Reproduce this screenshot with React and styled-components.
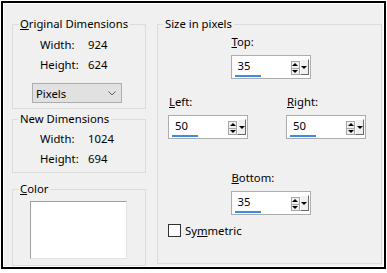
import React from "react";
import styled, { createGlobalStyle } from "styled-components";

const GlobalStyle = createGlobalStyle`
  html, body {
    margin: 0;
    padding: 0;
    background: #fff;
  }
  body {
    font-family: "Noto Sans", "Open Sans", sans-serif;
    font-size: 11.3px;
    color: #000;
  }
`;

const Frame = styled.div`
  box-sizing: border-box;
  margin: 1px 0 0 1px;
  width: 385px;
  height: 268px;
  border: 2px solid #000;
  background: #f0f0f0;
  box-shadow: inset 0 0 0 1px #fff;
  padding: 13px 0 0 9px;
  display: flex;
  gap: 11px;
`;

const LeftColumn = styled.div`
  width: 134px;
  display: flex;
  flex-direction: column;
`;

const Group = styled.fieldset`
  box-sizing: border-box;
  margin: ${(p) => p.$mt || 0}px 0 0 0;
  padding: 0;
  min-width: 0;
  width: ${(p) => p.$w}px;
  height: ${(p) => p.$h}px;
  border: 1px solid #dcdcdc;
`;

const Legend = styled.legend`
  margin-left: 5px;
  padding: 0 2px;
  line-height: 16px;
  font-size: 11.3px;
`;

const Key = styled.u`
  text-decoration: underline;
  text-underline-offset: 1px;
`;

const InfoRows = styled.div`
  padding-top: ${(p) => p.$pt || 0}px;
`;

const InfoRow = styled.div`
  display: flex;
  align-items: center;
  height: 20px;
  padding-left: 27px;
`;

const InfoLabel = styled.span`
  width: 48px;
`;

const Select = styled.div`
  box-sizing: border-box;
  margin: 9px 0 0 19px;
  width: 90px;
  height: 20px;
  display: flex;
  align-items: center;
  justify-content: space-between;
  padding: 0 5px 0 3px;
  background: #e1e1e1;
  border: 1px solid #adadad;
`;

const Swatch = styled.div`
  box-sizing: border-box;
  margin: 4px 0 0 17px;
  width: 97px;
  height: 58px;
  background: #fff;
  border: 1px solid;
  border-color: #a0a0a0 #e3e3e3 #e3e3e3 #a0a0a0;
`;

const SizeBody = styled.div`
  padding-top: 2px;
  display: flex;
  flex-direction: column;
`;

const CenterRow = styled.div`
  display: flex;
  justify-content: center;
  padding-left: 2px;
  margin-top: ${(p) => p.$mt || 0}px;
`;

const SideRow = styled.div`
  display: flex;
  gap: 38px;
  padding-left: 10px;
  margin-top: ${(p) => p.$mt || 0}px;
`;

const Field = styled.div`
  display: flex;
  flex-direction: column;
  gap: 5px;
`;

const FieldLabel = styled.span`
  line-height: 16px;
  padding-left: 1px;
`;

const SpinBox = styled.div`
  box-sizing: border-box;
  width: 80px;
  height: 24px;
  display: flex;
  padding: 2px 1px 0 3px;
  background: #fff;
  border: 1px solid #adadad;
`;

const ValueCol = styled.div`
  flex: 1;
  display: flex;
  flex-direction: column;
`;

const ValueText = styled.span`
  line-height: 16px;
  margin-left: 3px;
`;

const ValueBar = styled.div`
  margin-top: 1px;
  width: 26px;
  height: 2px;
  background: #3a8ee6;
`;

const UpDown = styled.div`
  box-sizing: border-box;
  margin-top: 3px;
  width: 9px;
  height: 14px;
  display: flex;
  flex-direction: column;
  border: 1px solid #a6a6a6;
  background: #f0f0f0;
`;

const Half = styled.div`
  flex: 1;
  display: flex;
  align-items: center;
  justify-content: center;
  & + & {
    border-top: 1px solid #a6a6a6;
  }
`;

const Tri = styled.div`
  width: 0;
  height: 0;
  border-left: 3px solid transparent;
  border-right: 3px solid transparent;
  ${(p) =>
    p.$up
      ? "border-bottom: 3px solid #000;"
      : "border-top: 3px solid #000;"}
`;

const DropBtn = styled.div`
  box-sizing: border-box;
  margin-top: 1px;
  width: 9px;
  height: 16px;
  display: flex;
  align-items: center;
  justify-content: center;
  background: #f0f0f0;
  border: 1px solid;
  border-color: #fff #696969 #696969 #fff;
`;

const CheckRow = styled.label`
  display: flex;
  align-items: center;
  gap: 4px;
  height: 16px;
  padding-left: 10px;
  margin-top: 7px;
`;

const CheckBox = styled.span`
  box-sizing: border-box;
  width: 13px;
  height: 13px;
  background: #fff;
  border: 1px solid #333;
`;

const Spinner = ({ label, value }) => (
  <Field>
    <FieldLabel>{label}</FieldLabel>
    <SpinBox>
      <ValueCol>
        <ValueText>{value}</ValueText>
        <ValueBar />
      </ValueCol>
      <UpDown>
        <Half>
          <Tri $up />
        </Half>
        <Half>
          <Tri />
        </Half>
      </UpDown>
      <DropBtn>
        <Tri />
      </DropBtn>
    </SpinBox>
  </Field>
);

const Info = ({ label, value }) => (
  <InfoRow>
    <InfoLabel>{label}</InfoLabel>
    <span>{value}</span>
  </InfoRow>
);

export default function App() {
  return (
    <>
      <GlobalStyle />
      <Frame>
        <LeftColumn>
          <Group $w={134} $h={93}>
            <Legend>
              <Key>O</Key>riginal Dimensions
            </Legend>
            <InfoRows $pt={2}>
              <Info label="Width:" value="924" />
              <Info label="Height:" value="624" />
            </InfoRows>
            <Select>
              <span>Pixels</span>
              <svg width="8" height="5" viewBox="0 0 8 5">
                <polyline points="0.5,0.5 4,4 7.5,0.5" fill="none" stroke="#606060" strokeWidth="1" />
              </svg>
            </Select>
          </Group>
          <Group $w={134} $h={62} $mt={2}>
            <Legend>New Dimensions</Legend>
            <InfoRows $pt={1}>
              <Info label="Width:" value="1024" />
              <Info label="Height:" value="694" />
            </InfoRows>
          </Group>
          <Group $w={134} $h={85} $mt={8}>
            <Legend>
              <Key>C</Key>olor
            </Legend>
            <Swatch />
          </Group>
        </LeftColumn>
        <Group $w={225} $h={248}>
          <Legend>Size in pixels</Legend>
          <SizeBody>
            <CenterRow>
              <Spinner label={<><Key>T</Key>op:</>} value="35" />
            </CenterRow>
            <SideRow $mt={15}>
              <Spinner label={<><Key>L</Key>eft:</>} value="50" />
              <Spinner label={<><Key>R</Key>ight:</>} value="50" />
            </SideRow>
            <CenterRow $mt={31}>
              <Spinner label={<><Key>B</Key>ottom:</>} value="35" />
            </CenterRow>
            <CheckRow>
              <CheckBox />
              <span>
                Sy<Key>m</Key>metric
              </span>
            </CheckRow>
          </SizeBody>
        </Group>
      </Frame>
    </>
  );
}
